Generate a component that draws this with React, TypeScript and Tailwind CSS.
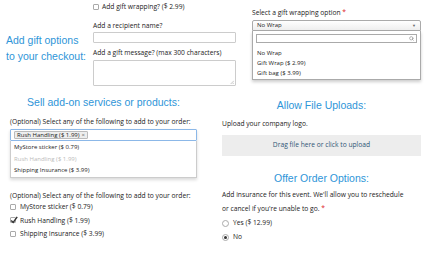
import { Search } from "lucide-react";

const body = "font-['Open_Sans',sans-serif] text-[6.7px] text-[#222]";
const heading =
  "font-['Liberation_Sans',Arial,sans-serif] text-[10.5px] leading-[16px] text-[#2e95d8]";

function Box({ checked = false }: { checked?: boolean }) {
  return (
    <span className="relative inline-block h-[6px] w-[6px] shrink-0 rounded-[1px] border border-[#aaa] bg-white">
      {checked && (
        <svg viewBox="0 0 10 10" className="absolute -left-[1px] -top-[2px] h-[8px] w-[8px]">
          <path d="M1.5 5.5 L4 8 L9 1" fill="none" stroke="#333" strokeWidth="1.8" />
        </svg>
      )}
    </span>
  );
}

function Radio({ on = false }: { on?: boolean }) {
  return (
    <span className="grid h-[7px] w-[7px] shrink-0 place-items-center rounded-full border border-[#aaa] bg-white">
      {on && <span className="h-[3px] w-[3px] rounded-full bg-[#333]" />}
    </span>
  );
}

export default function App() {
  return (
    <div className={`h-[262px] w-[425px] overflow-hidden bg-white ${body}`}>
      {/* gift options */}
      <div className="flex h-[92px]">
        <div className="flex w-[93px] shrink-0 items-start pl-[6px] pt-[32px]">
          <h2 className={heading}>
            Add gift options
            <br />
            to your checkout:
          </h2>
        </div>
        <div className="flex w-[143px] shrink-0 flex-col pt-[3px]">
          <label className="flex h-[8px] items-center gap-[3px]">
            <Box />
            <span className="leading-[8px]">Add gift wrapping? ($ 2.99)</span>
          </label>
          <div className="mt-[10px] leading-[9px]">Add a recipient name?</div>
          <div className="mt-[2px] h-[11px] rounded-[1px] border border-[#ccc] bg-white" />
          <div className="mt-[5px] leading-[9px]">Add a gift message? (max 300 characters)</div>
          <div className="relative mt-[3px] h-[26px] rounded-[1px] border border-[#ccc] bg-white">
            <svg viewBox="0 0 6 6" className="absolute bottom-[1px] right-[1px] h-[4px] w-[4px]">
              <path d="M6 1 L1 6 M6 4 L4 6" stroke="#999" strokeWidth="0.8" />
            </svg>
          </div>
        </div>
        <div className="ml-[16px] flex w-[169px] shrink-0 flex-col pt-[9px]">
          <div className="leading-[8px]">
            Select a gift wrapping option <span className="text-[#d22]">*</span>
          </div>
          <div className="relative mt-[3px]">
            <div className="flex h-[11px] items-center justify-between rounded-t-[2px] border border-[#aaa] bg-gradient-to-b from-white to-[#eee] px-[4px] text-[6px]">
              <span>No Wrap</span>
              <span className="text-[4px] text-[#666]">▼</span>
            </div>
            <div className="absolute left-0 right-0 top-[11px] h-[49px] border border-t-0 border-[#aaa] bg-white px-[3px] pt-[3px] text-[6px] shadow-[0_2px_3px_rgba(0,0,0,0.2)]">
              <div className="flex h-[9px] items-center justify-end border border-[#aaa] pr-[2px]">
                <Search size={5} strokeWidth={3} className="text-[#888]" />
              </div>
              <div className="mt-[5px] flex flex-col px-[1px] leading-[10px]">
                <span>No Wrap</span>
                <span>Gift Wrap ($ 2.99)</span>
                <span>Gift bag ($ 3.99)</span>
              </div>
            </div>
          </div>
        </div>
      </div>

      {/* bottom two columns */}
      <div className="flex">
        <div className="ml-[10px] flex w-[187px] shrink-0 flex-col">
          <h2 className={`${heading} mt-[2px] text-center`}>Sell add-on services or products:</h2>
          <div className="mt-[7px] leading-[9px]">
            (Optional) Select any of the following to add to your order:
          </div>
          <div className="mt-[3px] shadow-[0_2px_3px_rgba(0,0,0,0.15)]">
            <div className="flex h-[12px] items-center rounded-[1px] border border-[#8cb8e8] bg-white px-[3px]">
              <span className="flex h-[8px] items-center gap-[2px] rounded-[1px] border border-[#bbb] bg-[#eee] px-[2px] text-[6px] leading-[8px]">
                Rush Handling ($ 1.99) <span className="text-[#666]">×</span>
              </span>
            </div>
            <div className="flex h-[37px] flex-col border border-t-0 border-[#ccc] bg-white px-[3px] pt-[1px] text-[6px] leading-[11.5px]">
              <span>MyStore sticker ($ 0.79)</span>
              <span className="text-[#bbb]">Rush Handling ($ 1.99)</span>
              <span>Shipping Insurance ($ 3.99)</span>
            </div>
          </div>
          <div className="mt-[13px] leading-[9px]">
            (Optional) Select any of the following to add to your order:
          </div>
          <div className="flex flex-col leading-[13.5px]">
            <label className="flex items-center gap-[4px]">
              <Box />
              MyStore sticker ($ 0.79)
            </label>
            <label className="flex items-center gap-[4px]">
              <Box checked />
              Rush Handling ($ 1.99)
            </label>
            <label className="flex items-center gap-[4px]">
              <Box />
              Shipping Insurance ($ 3.99)
            </label>
          </div>
        </div>

        <div className="ml-[25px] flex w-[199px] shrink-0 flex-col">
          <h2 className={`${heading} mt-[5px] text-center`}>Allow File Uploads:</h2>
          <div className="mt-[6px] leading-[9px]">Upload your company logo.</div>
          <div className="mt-[7px] flex h-[21px] items-center justify-center bg-[#ededed] text-[#2e5575]">
            Drag file here or click to upload
          </div>
          <h2 className={`${heading} mt-[14px] text-center`}>Offer Order Options:</h2>
          <div className="mt-[2px] leading-[14px]">
            Add insurance for this event. We'll allow you to reschedule
            <br />
            or cancel if you're unable to go. <span className="text-[#d22]">*</span>
          </div>
          <div className="flex flex-col leading-[14px]">
            <label className="flex items-center gap-[4px]">
              <Radio />
              Yes ($ 12.99)
            </label>
            <label className="flex items-center gap-[4px]">
              <Radio on />
              No
            </label>
          </div>
        </div>
      </div>
    </div>
  );
}
